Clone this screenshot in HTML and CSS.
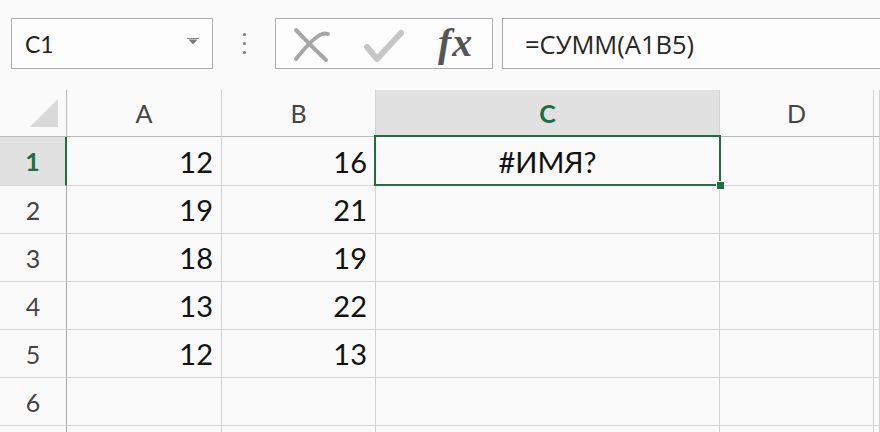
FILE: index.html
```html
<!DOCTYPE html>
<html lang="ru">
<head>
<meta charset="utf-8">
<title>Excel</title>
<link rel="stylesheet" href="styles.css">
</head>
<body>
<div class="app">
  <div class="toolbar">
    <div class="namebox">
      <span class="name">C1</span>
      <svg class="dd" width="12" height="7" viewBox="0 0 12 7"><path d="M0 0.5H12" stroke="#8a8a8a" stroke-width="1"/><path d="M1.5 1.5H10.5L6 6.5Z" fill="#7a7a7a"/></svg>
    </div>
    <div class="dots"><span></span><span></span><span></span></div>
    <div class="fxbox">
      <svg class="ic-x" width="40" height="36" viewBox="0 0 40 36">
        <path d="M4 3 C10 9 18 18 34 33" stroke="#a6a6a6" stroke-width="4" fill="none" stroke-linecap="round"/>
        <path d="M4 32 C12 22 22 10 30 7 C33 6 35 7 36 7" stroke="#a6a6a6" stroke-width="4" fill="none" stroke-linecap="round"/>
      </svg>
      <svg class="ic-ok" width="40" height="36" viewBox="0 0 40 36">
        <path d="M3 18 L13 30 L37 4" stroke="#c6c6c6" stroke-width="6" fill="none" stroke-linecap="round" stroke-linejoin="round"/>
      </svg>
      <span class="fx">fx</span>
    </div>
    <div class="formula">=СУММ(A1B5)</div>
  </div>

  <div class="grid">
    <div class="hd corner"><svg width="30" height="30" viewBox="0 0 30 30"><path d="M29 1V29H1Z" fill="#d9d9d9"/></svg></div>
    <div class="hd col">A</div>
    <div class="hd col">B</div>
    <div class="hd col sel">C</div>
    <div class="hd col">D</div>
    <div class="hd col"></div>

    <div class="rh sel">1</div>
    <div class="c num">12</div>
    <div class="c num">16</div>
    <div class="c active">#ИМЯ?<span class="handle"></span></div>
    <div class="c"></div>
    <div class="c"></div>

    <div class="rh">2</div>
    <div class="c num">19</div>
    <div class="c num">21</div>
    <div class="c"></div>
    <div class="c"></div>
    <div class="c"></div>

    <div class="rh">3</div>
    <div class="c num">18</div>
    <div class="c num">19</div>
    <div class="c"></div>
    <div class="c"></div>
    <div class="c"></div>

    <div class="rh">4</div>
    <div class="c num">13</div>
    <div class="c num">22</div>
    <div class="c"></div>
    <div class="c"></div>
    <div class="c"></div>

    <div class="rh">5</div>
    <div class="c num">12</div>
    <div class="c num">13</div>
    <div class="c"></div>
    <div class="c"></div>
    <div class="c"></div>

    <div class="rh">6</div>
    <div class="c"></div>
    <div class="c"></div>
    <div class="c"></div>
    <div class="c"></div>
    <div class="c"></div>

    <div class="rh"></div>
    <div class="c"></div>
    <div class="c"></div>
    <div class="c"></div>
    <div class="c"></div>
    <div class="c"></div>
  </div>
</div>
</body>
</html>
```

FILE: styles.css
```css
html, body {
  margin: 0;
  padding: 0;
  background: #fafafa;
  overflow: hidden;
}
.app {
  width: 880px;
  height: 432px;
  overflow: hidden;
  font-family: Lato, "Open Sans", sans-serif;
}
.toolbar {
  height: 90px;
  box-sizing: border-box;
  padding: 18px 0 0 11px;
  display: flex;
  align-items: flex-start;
}
.namebox {
  width: 202px;
  height: 51px;
  box-sizing: border-box;
  border: 1px solid #ababab;
  background: #fdfdfd;
  display: flex;
  align-items: center;
  justify-content: space-between;
  padding: 0 13px 0 13px;
}
.name {
  font-family: Lato, sans-serif;
  font-size: 23px;
  color: #222;
  margin-top: 1px;
}
.dd {
  margin-top: -4px;
}
.dots {
  width: 62px;
  height: 51px;
  display: flex;
  flex-direction: column;
  align-items: center;
  justify-content: center;
  gap: 6px;
}
.dots span {
  width: 3px;
  height: 3px;
  border-radius: 50%;
  background: #7a7a7a;
}
.fxbox {
  width: 218px;
  height: 51px;
  box-sizing: border-box;
  border: 1px solid #ababab;
  background: #fdfdfd;
  display: flex;
  align-items: center;
  padding-left: 16px;
}
.ic-x {
  margin-top: 3px;
}
.ic-ok {
  margin-left: 32px;
  margin-top: 7px;
}
.fx {
  margin-left: 34px;
  font-family: "Liberation Serif", serif;
  font-style: italic;
  font-weight: bold;
  font-size: 40px;
  color: #555;
  letter-spacing: 1px;
  margin-top: -2px;
}
.formula {
  flex: 1;
  margin-left: 9px;
  height: 51px;
  box-sizing: border-box;
  border: 1px solid #ababab;
  border-right: none;
  background: #fdfdfd;
  display: flex;
  align-items: center;
  padding-left: 22px;
  font-family: "Open Sans", sans-serif;
  font-size: 25.5px;
  color: #262626;
}
.grid {
  display: grid;
  grid-template-columns: 67px 155px 154px 344px 154px 1fr;
  grid-template-rows: 47px 49px repeat(6, 48px);
}
.grid > div {
  box-sizing: border-box;
  border-right: 1px solid #d4d4d4;
  border-bottom: 1px solid #d4d4d4;
  display: flex;
  align-items: center;
}
.hd {
  justify-content: center;
  font-size: 25px;
  color: #444;
  background: #fafafa;
  border-bottom-color: #b9b9b9 !important;
}
.corner {
  justify-content: flex-end !important;
  align-items: flex-end !important;
  padding: 0 7px 8px 0;
  border-right-color: #b9b9b9 !important;
}
.hd.sel {
  background: #e1e1e1;
  color: #1f6e43;
  font-weight: bold;
}
.rh {
  justify-content: center;
  font-size: 25px;
  color: #444;
  border-right-color: #a9a9a9 !important;
}
.rh.sel {
  background: #e1e1e1;
  color: #1f6e43;
  font-weight: bold;
  border-right: 2px solid #1f6e43 !important;
}
.c {
  background: #fafafa;
  font-size: 29px;
  color: #111;
}
.num {
  justify-content: flex-end;
  padding-right: 8px;
}
.active {
  position: relative;
  justify-content: center;
}
.active::after {
  content: "";
  position: absolute;
  left: -2px;
  top: -2px;
  right: -2px;
  bottom: -1px;
  border: 2px solid #1f6e43;
  z-index: 2;
}
.handle {
  position: absolute;
  right: -6px;
  bottom: -5px;
  width: 7px;
  height: 7px;
  background: #1f6e43;
  border: 1px solid #fafafa;
  z-index: 3;
}
```
